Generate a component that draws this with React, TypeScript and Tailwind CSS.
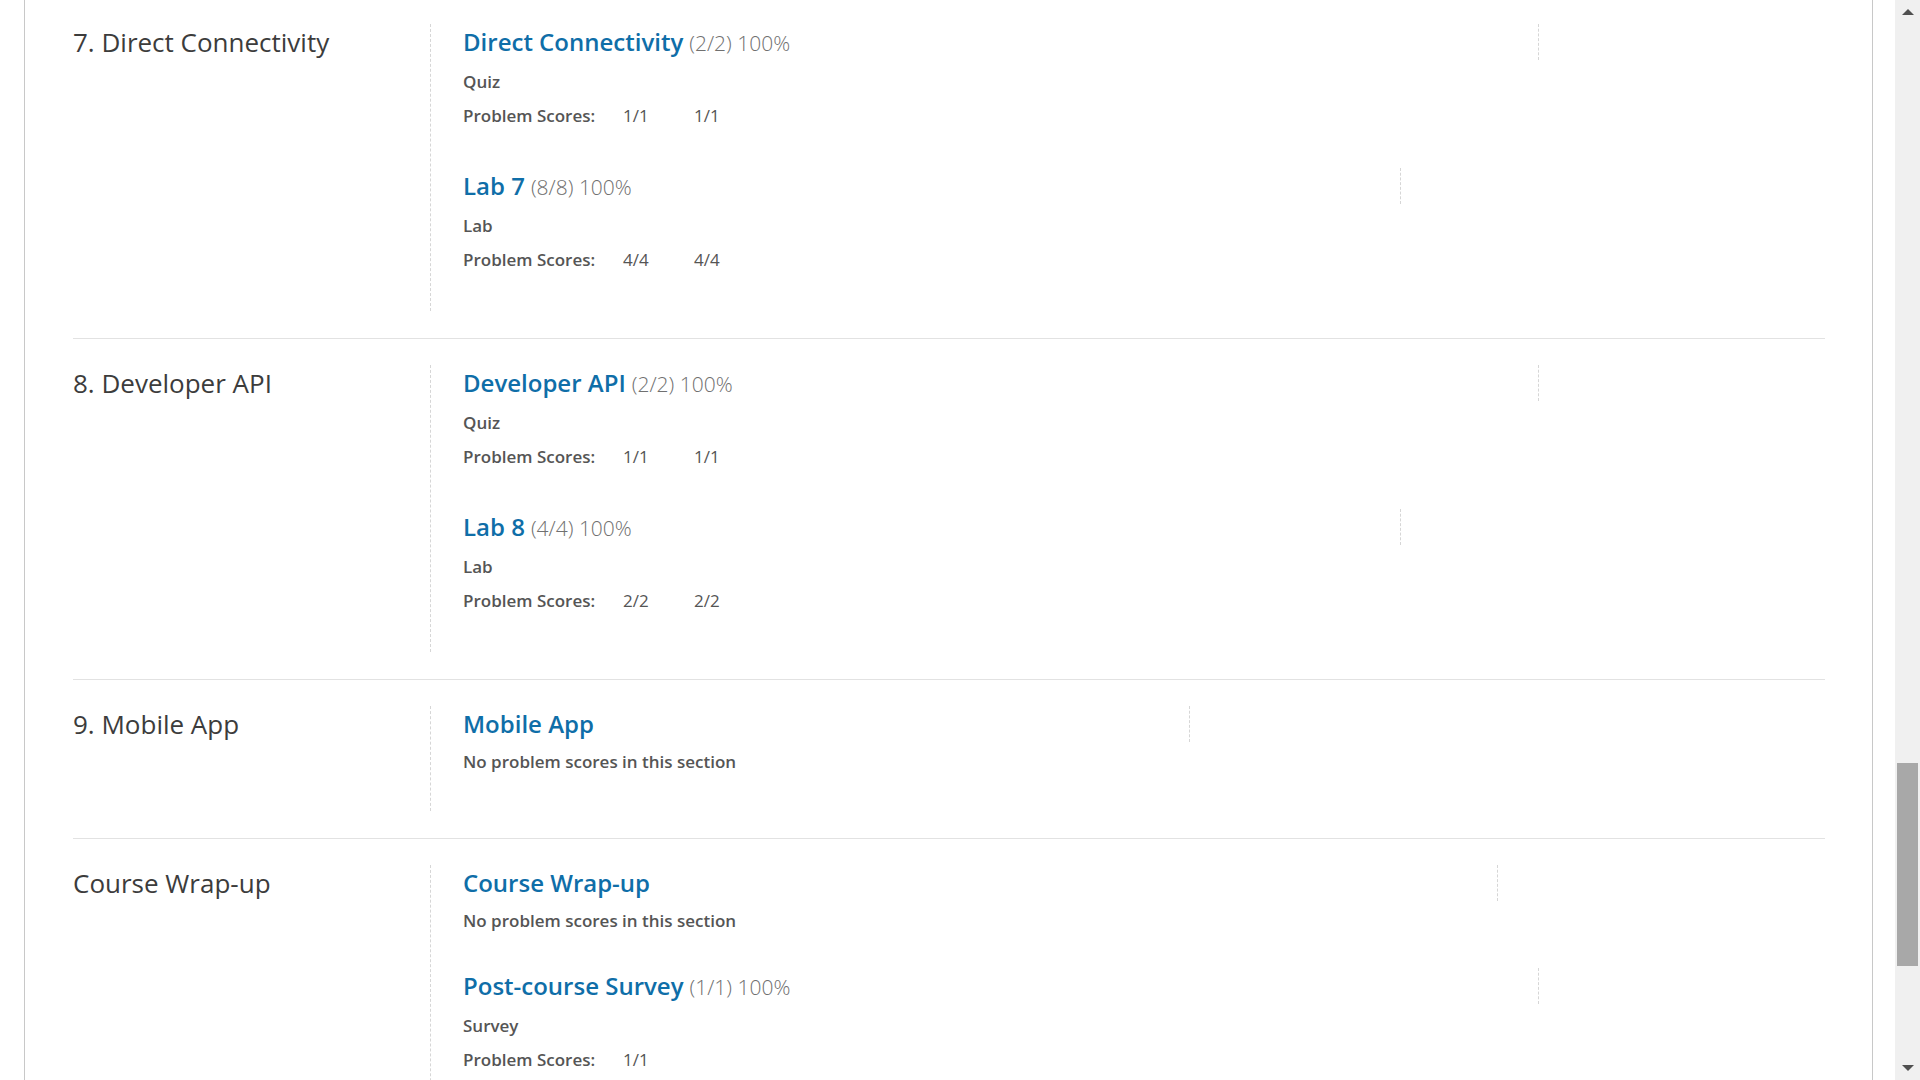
import React from 'react';

type Sub = {
  title: string;
  score?: string;
  kind?: string;
  scores?: string[];
  empty?: boolean;
  lineW: string;
};

type Section = {
  name: string;
  subs: Sub[];
};

const sections: Section[] = [
  {
    name: '7. Direct Connectivity',
    subs: [
      { title: 'Direct Connectivity', score: '(2/2) 100%', kind: 'Quiz', scores: ['1/1', '1/1'], lineW: 'w-[1076px]' },
      { title: 'Lab 7', score: '(8/8) 100%', kind: 'Lab', scores: ['4/4', '4/4'], lineW: 'w-[938px]' },
    ],
  },
  {
    name: '8. Developer API',
    subs: [
      { title: 'Developer API', score: '(2/2) 100%', kind: 'Quiz', scores: ['1/1', '1/1'], lineW: 'w-[1076px]' },
      { title: 'Lab 8', score: '(4/4) 100%', kind: 'Lab', scores: ['2/2', '2/2'], lineW: 'w-[938px]' },
    ],
  },
  {
    name: '9. Mobile App',
    subs: [{ title: 'Mobile App', empty: true, lineW: 'w-[727px]' }],
  },
  {
    name: 'Course Wrap-up',
    subs: [
      { title: 'Course Wrap-up', empty: true, lineW: 'w-[1035px]' },
      { title: 'Post-course Survey', score: '(1/1) 100%', kind: 'Survey', scores: ['1/1'], lineW: 'w-[1076px]' },
    ],
  },
];

const Subsection = ({ sub, last }: { sub: Sub; last: boolean }) => (
  <div className={`flex flex-col ${sub.empty ? (last ? 'mb-[-2px]' : 'mb-[-5px]') : ''}`}>
    <div className={`${sub.lineW} border-r border-dashed border-[#d6d6d6] h-[36px] flex items-center`}>
      <h3 className="text-[24px] leading-[36px] whitespace-nowrap">
        <a className="font-semibold text-[#0f6ea8]">{sub.title}</a>
        {sub.score && <span className="font-light text-[#707070] ml-[6px] text-[21px]">{sub.score}</span>}
      </h3>
    </div>
    {sub.empty ? (
      <p className="mt-[8px] text-[17px] leading-[24px] font-semibold text-[#555]">No problem scores in this section</p>
    ) : (
      <>
        <p className="mt-[10px] text-[17px] leading-[24px] font-semibold text-[#555]">{sub.kind}</p>
        <div className="mt-[10px] flex text-[17px] leading-[24px] text-[#555]">
          <span className="w-[160px] font-semibold">Problem Scores:</span>
          {sub.scores?.map((s, i) => (
            <span key={i} className="w-[71px]">{s}</span>
          ))}
        </div>
      </>
    )}
  </div>
);

export default function App() {
  return (
    <div className="h-[1080px] w-[1920px] overflow-hidden bg-white flex font-['Open_Sans',sans-serif]">
      {/* page */}
      <div className="w-[1895px] h-full flex">
        <div className="w-[24px]" />
        <div className="w-[1849px] h-full border-l border-r border-[#c8c8c8] overflow-hidden">
          <div className="-mt-[2px] pl-[48px] pr-[47px]">
            {sections.map((sec, idx) => (
              <div key={idx} className="flex pt-[26px] pb-[27px] border-b border-[#e2e2e2]">
                <div className="w-[357px] shrink-0">
                  <h2 className="text-[26px] leading-[36px] text-[#3c3c3c]">{sec.name}</h2>
                </div>
                <div className="flex-1 border-l border-dashed border-[#d6d6d6] pl-[32px] pb-[39px] flex flex-col gap-[40px]">
                  {sec.subs.map((sub, j) => (
                    <Subsection key={j} sub={sub} last={j === sec.subs.length - 1} />
                  ))}
                </div>
              </div>
            ))}
          </div>
        </div>
      </div>
      {/* scrollbar */}
      <div className="w-[25px] h-full bg-[#f0f0f0] flex flex-col items-center">
        <div className="h-[24px] flex items-center justify-center">
          <div className="w-0 h-0 border-l-[6px] border-r-[6px] border-b-[6px] border-l-transparent border-r-transparent border-b-[#505050]" />
        </div>
        <div className="mt-[739px] w-[21px] h-[203px] bg-[#a8a8a8]" />
        <div className="flex-1" />
        <div className="h-[24px] flex items-center justify-center">
          <div className="w-0 h-0 border-l-[6px] border-r-[6px] border-t-[6px] border-l-transparent border-r-transparent border-t-[#505050]" />
        </div>
      </div>
    </div>
  );
}
